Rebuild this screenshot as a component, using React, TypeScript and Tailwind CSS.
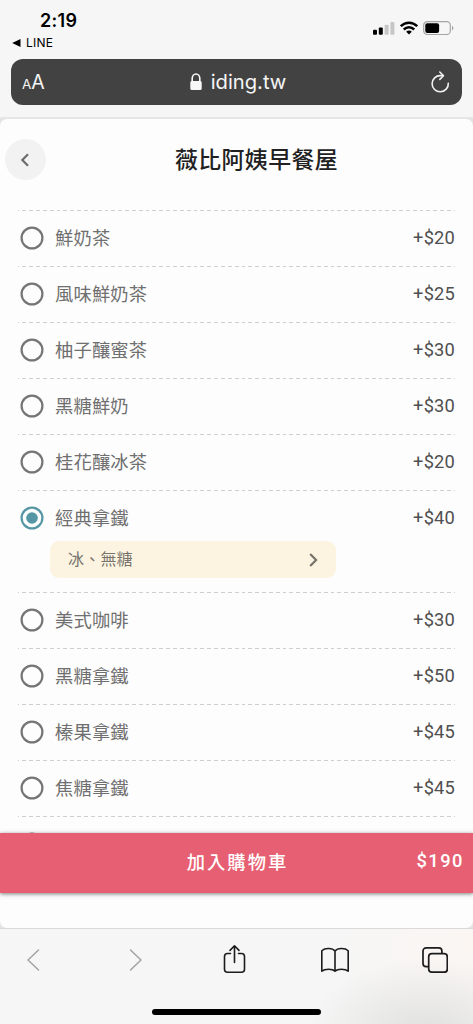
import React from 'react';

interface DrinkOption {
  name: string;
  price: string;
  note?: string;
}

const options: DrinkOption[] = [
  { name: '鮮奶茶', price: '+$20' },
  { name: '風味鮮奶茶', price: '+$25' },
  { name: '柚子釀蜜茶', price: '+$30' },
  { name: '黑糖鮮奶', price: '+$30' },
  { name: '桂花釀冰茶', price: '+$20' },
  { name: '經典拿鐵', price: '+$40', note: '冰、無糖' },
  { name: '美式咖啡', price: '+$30' },
  { name: '黑糖拿鐵', price: '+$50' },
  { name: '榛果拿鐵', price: '+$45' },
  { name: '焦糖拿鐵', price: '+$45' },
  { name: '', price: '' },
];

function StatusBar() {
  return (
    <div className="flex h-[59px] justify-between pl-3 pr-[19px] font-['Inter','Liberation_Sans',sans-serif] text-black">
      <div className="pt-[9px]">
        <div className="pl-[28px] text-[18px] font-semibold leading-[23px] tracking-[0.3px]">2:19</div>
        <div className="flex items-center gap-[5px] text-[12px] leading-[21px] tracking-[0.2px]">
          <svg width="9" height="8" viewBox="0 0 9 8">
            <path d="M.2 4 8.500 .1v7.800z" />
          </svg>
          LINE
        </div>
      </div>
      <div className="flex items-start gap-[5px] pt-[21px]">
        <svg width="22" height="14" viewBox="0 0 22 14">
          <rect x="0" y="8.7" width="4" height="5.1" rx="1" />
          <rect x="5.8" y="6.5" width="4" height="7.3" rx="1" />
          <rect x="11.6" y="3.7" width="4" height="10.1" rx="1" fill="#c6c6c6" />
          <rect x="17.4" y="1" width="4" height="12.8" rx="1" fill="#c6c6c6" />
        </svg>
        <svg width="18" height="14" viewBox="0 0 18 14" fill="none" stroke="#000" strokeWidth="2.5">
          <path d="M.8 5.200c4.700-4.700 11.700-4.700 16.400 0" />
          <path d="M3.800 8.500c3-3 7.400-3 10.400 0" />
          <path d="M6.200 10.700c1.600-1.500 4-1.500 5.600 0L9 13.600z" fill="#000" stroke="none" />
        </svg>
        <svg width="31" height="14" viewBox="0 0 31 14">
          <rect x=".7" y=".7" width="26.6" height="12.8" rx="3.6" fill="none" stroke="#a5a5a5" strokeWidth="1.2" />
          <rect x="2.3" y="2.3" width="13.8" height="9.6" rx="2" />
          <path d="M29 4.800c1.900.8 1.900 3.800 0 4.600z" fill="#a5a5a5" />
        </svg>
      </div>
    </div>
  );
}

function AddressBar() {
  return (
    <div className="mx-[11px] flex h-[46px] items-center justify-between rounded-[12px] bg-[#424242] pl-[11px] pr-3 font-['Inter','Liberation_Sans',sans-serif] text-[#f5f5f5]">
      <div className="flex w-[60px] items-baseline pt-px">
        <span className="text-[13.5px]">A</span>
        <span className="text-[19.5px]">A</span>
      </div>
      <div className="flex items-center gap-[9px] pl-[4px]">
        <svg width="12" height="18" viewBox="0 0 12 18">
          <rect x=".3" y="8" width="11.4" height="9" rx="1.5" fill="#f8f8f8" />
          <path d="M2.200 9V5.300a3.800 4.300 0 0 1 7.600 0V9" fill="none" stroke="#f8f8f8" strokeWidth="1.6" />
        </svg>
        <span className="text-[20.2px] leading-[24px]">iding.tw</span>
      </div>
      <div className="flex w-[60px] justify-end">
        <svg width="20" height="24" viewBox="0 0 20 24" fill="none" stroke="#f2f2f2" strokeWidth="1.6" strokeLinecap="round" strokeLinejoin="round">
          <path d="M12.800 5.600H10.500A8.100 8.100 0 1 0 18.300 13.200" />
          <path d="M9.800 2 13.500 5.700 9.800 9.400" />
        </svg>
      </div>
    </div>
  );
}

function Radio({ checked }: { checked: boolean }) {
  return (
    <svg
      width="24"
      height="24"
      viewBox="0 0 24 24"
      className={checked ? 'shrink-0 text-[#5596a5]' : 'shrink-0 text-[#757575]'}
    >
      <circle cx="12" cy="12" r="10.4" fill="none" stroke="currentColor" strokeWidth="2.2" />
      {checked && <circle cx="12" cy="12" r="5.8" fill="currentColor" />}
    </svg>
  );
}

function OptionRow({ name, price, note }: DrinkOption) {
  return (
    <li>
      <div className="h-[56px] bg-[repeating-linear-gradient(90deg,#cfcfcf_0_3.85px,transparent_3.85px_6.85px)] bg-[length:calc(100%+2.5px)_1.3px] bg-position-[right_top] bg-no-repeat">
        <div className="flex h-full items-center pl-[2px]">
          <Radio checked={!!note} />
          <span className="ml-[11px] grow pt-[2px] text-[18.3px] tracking-[0.17px] text-[#6f6f6f]">{name}</span>
          <span className="pb-px text-[18.3px] tracking-[0.17px] text-[#505050]">{price}</span>
        </div>
      </div>
      {note && (
        <div className="flex h-[46px] items-start">
          <div className="-mt-[5px] ml-[32px] flex h-[37px] w-[286px] items-center justify-between rounded-[9px] bg-[#fcf3e1] px-[18px] text-[16px] tracking-[0.2px] text-[#77736c]">
            <span className="pt-px">{note}</span>
            <svg width="9" height="14" viewBox="0 0 9 14" fill="none" stroke="#77736c" strokeWidth="2.2">
              <path d="m1.200 1 5.900 6-5.900 6" />
            </svg>
          </div>
        </div>
      )}
    </li>
  );
}

function Toolbar() {
  return (
    <div className="flex h-[96px] flex-col items-center justify-between bg-[#f6f6f6] bg-[radial-gradient(ellipse_120px_75px_at_90%_110%,#e0e0de,transparent),radial-gradient(ellipse_140px_90px_at_100%_15%,#fbf6f2,transparent)] pb-[9px]">
      <div className="flex w-full items-center pl-[26px] pt-[14px]">
        <svg width="15" height="34" viewBox="0 0 15 34" fill="none" stroke="#a3a3a3" strokeWidth="1.5" strokeLinecap="round" strokeLinejoin="round">
          <path d="M12.500 7 2 17l10.500 10" />
        </svg>
        <svg width="15" height="34" viewBox="0 0 15 34" fill="none" stroke="#a3a3a3" strokeWidth="1.5" strokeLinecap="round" strokeLinejoin="round" className="ml-[86px]">
          <path d="M3.500 7 14 17 3.500 27" />
        </svg>
        <svg width="26" height="34" viewBox="0 0 26 34" fill="none" stroke="#1c1c1c" strokeWidth="1.6" strokeLinecap="round" strokeLinejoin="round" className="ml-[80px]">
          <path d="M8.500 10.500h-3a3 3 0 0 0-3 3v12.800a3 3 0 0 0 3 3h14a3 3 0 0 0 3-3V13.500a3 3 0 0 0-3-3h-3" />
          <path d="M12.500 19.500V3M8 7.400 12.500 2.800l4.500 4.600" />
        </svg>
        <svg width="30" height="34" viewBox="0 0 30 34" fill="none" stroke="#1c1c1c" strokeWidth="1.6" strokeLinecap="round" strokeLinejoin="round" className="ml-[72px]">
          <path d="M15 8C12.500 4.800 5 4.600 1.800 7.700v20.500c3-2.600 10.700-2.600 13.200 0 2.500-2.600 10.200-2.600 13.200 0V7.700C25 4.600 17.500 4.800 15 8zM15 8v20" />
        </svg>
        <svg width="28" height="34" viewBox="0 0 28 34" fill="none" stroke="#1c1c1c" strokeWidth="1.7" strokeLinejoin="round" className="ml-[70px]">
          <path d="M8.200 23.600H6.200A3.200 3.200 0 0 1 3 20.400V8a3.200 3.200 0 0 1 3.200-3.200h12.500A3.200 3.200 0 0 1 21.900 8v2.300" />
          <rect x="8.7" y="10.6" width="18.6" height="18.6" rx="3.2" />
        </svg>
      </div>
      <div className="h-[6px] w-[169px] rounded-full bg-black" />
    </div>
  );
}

export default function App() {
  return (
    <div className="flex h-[1024px] w-[473px] flex-col overflow-hidden bg-[#f6f6f6]">
      <header className="h-[119px] shrink-0 border-b-2 border-[#e6e6e6]">
        <StatusBar />
        <AddressBar />
      </header>
      <div className="bg-[#e4e4e4]">
        <main className="flex h-[809px] flex-col overflow-hidden rounded-[7px] bg-[#fdfdfd] font-['Roboto','Noto_Sans_CJK_TC',sans-serif]">
          <div className="flex h-[91px] shrink-0 items-start px-[5px] pt-[20px]">
            <button type="button" className="flex size-[41px] items-center justify-center rounded-full bg-[#f2f2f2] pr-[2px]">
              <svg width="10" height="14" viewBox="0 0 10 14" fill="none" stroke="#6d6d6d" strokeWidth="2.2">
                <path d="M8 1.200 2.300 7 8 12.800" />
              </svg>
            </button>
            <h1 className="grow pr-px pt-px text-center text-[22.9px] font-medium leading-[41px] tracking-[0.4px] text-[#212121]">
              薇比阿姨早餐屋
            </h1>
          </div>
          <ul className="h-[623px] shrink-0 overflow-hidden px-[18px]">
            {options.map((option, index) => (
              <OptionRow key={index} {...option} />
            ))}
          </ul>
          <div className="relative flex h-[59.5px] shrink-0 items-center bg-[#e75f72] pl-[111px] pr-[9px] font-medium text-white shadow-[0_1px_4px_rgba(0,0,0,0.5)]">
            <span className="grow text-center text-[18.3px] tracking-[2px]">加入購物車</span>
            <span className="w-[100px] pb-[4px] text-right text-[18.3px] tracking-[1.5px]">$190</span>
          </div>
        </main>
        <div className="h-px bg-[#dadada]" />
      </div>
      <Toolbar />
    </div>
  );
}
